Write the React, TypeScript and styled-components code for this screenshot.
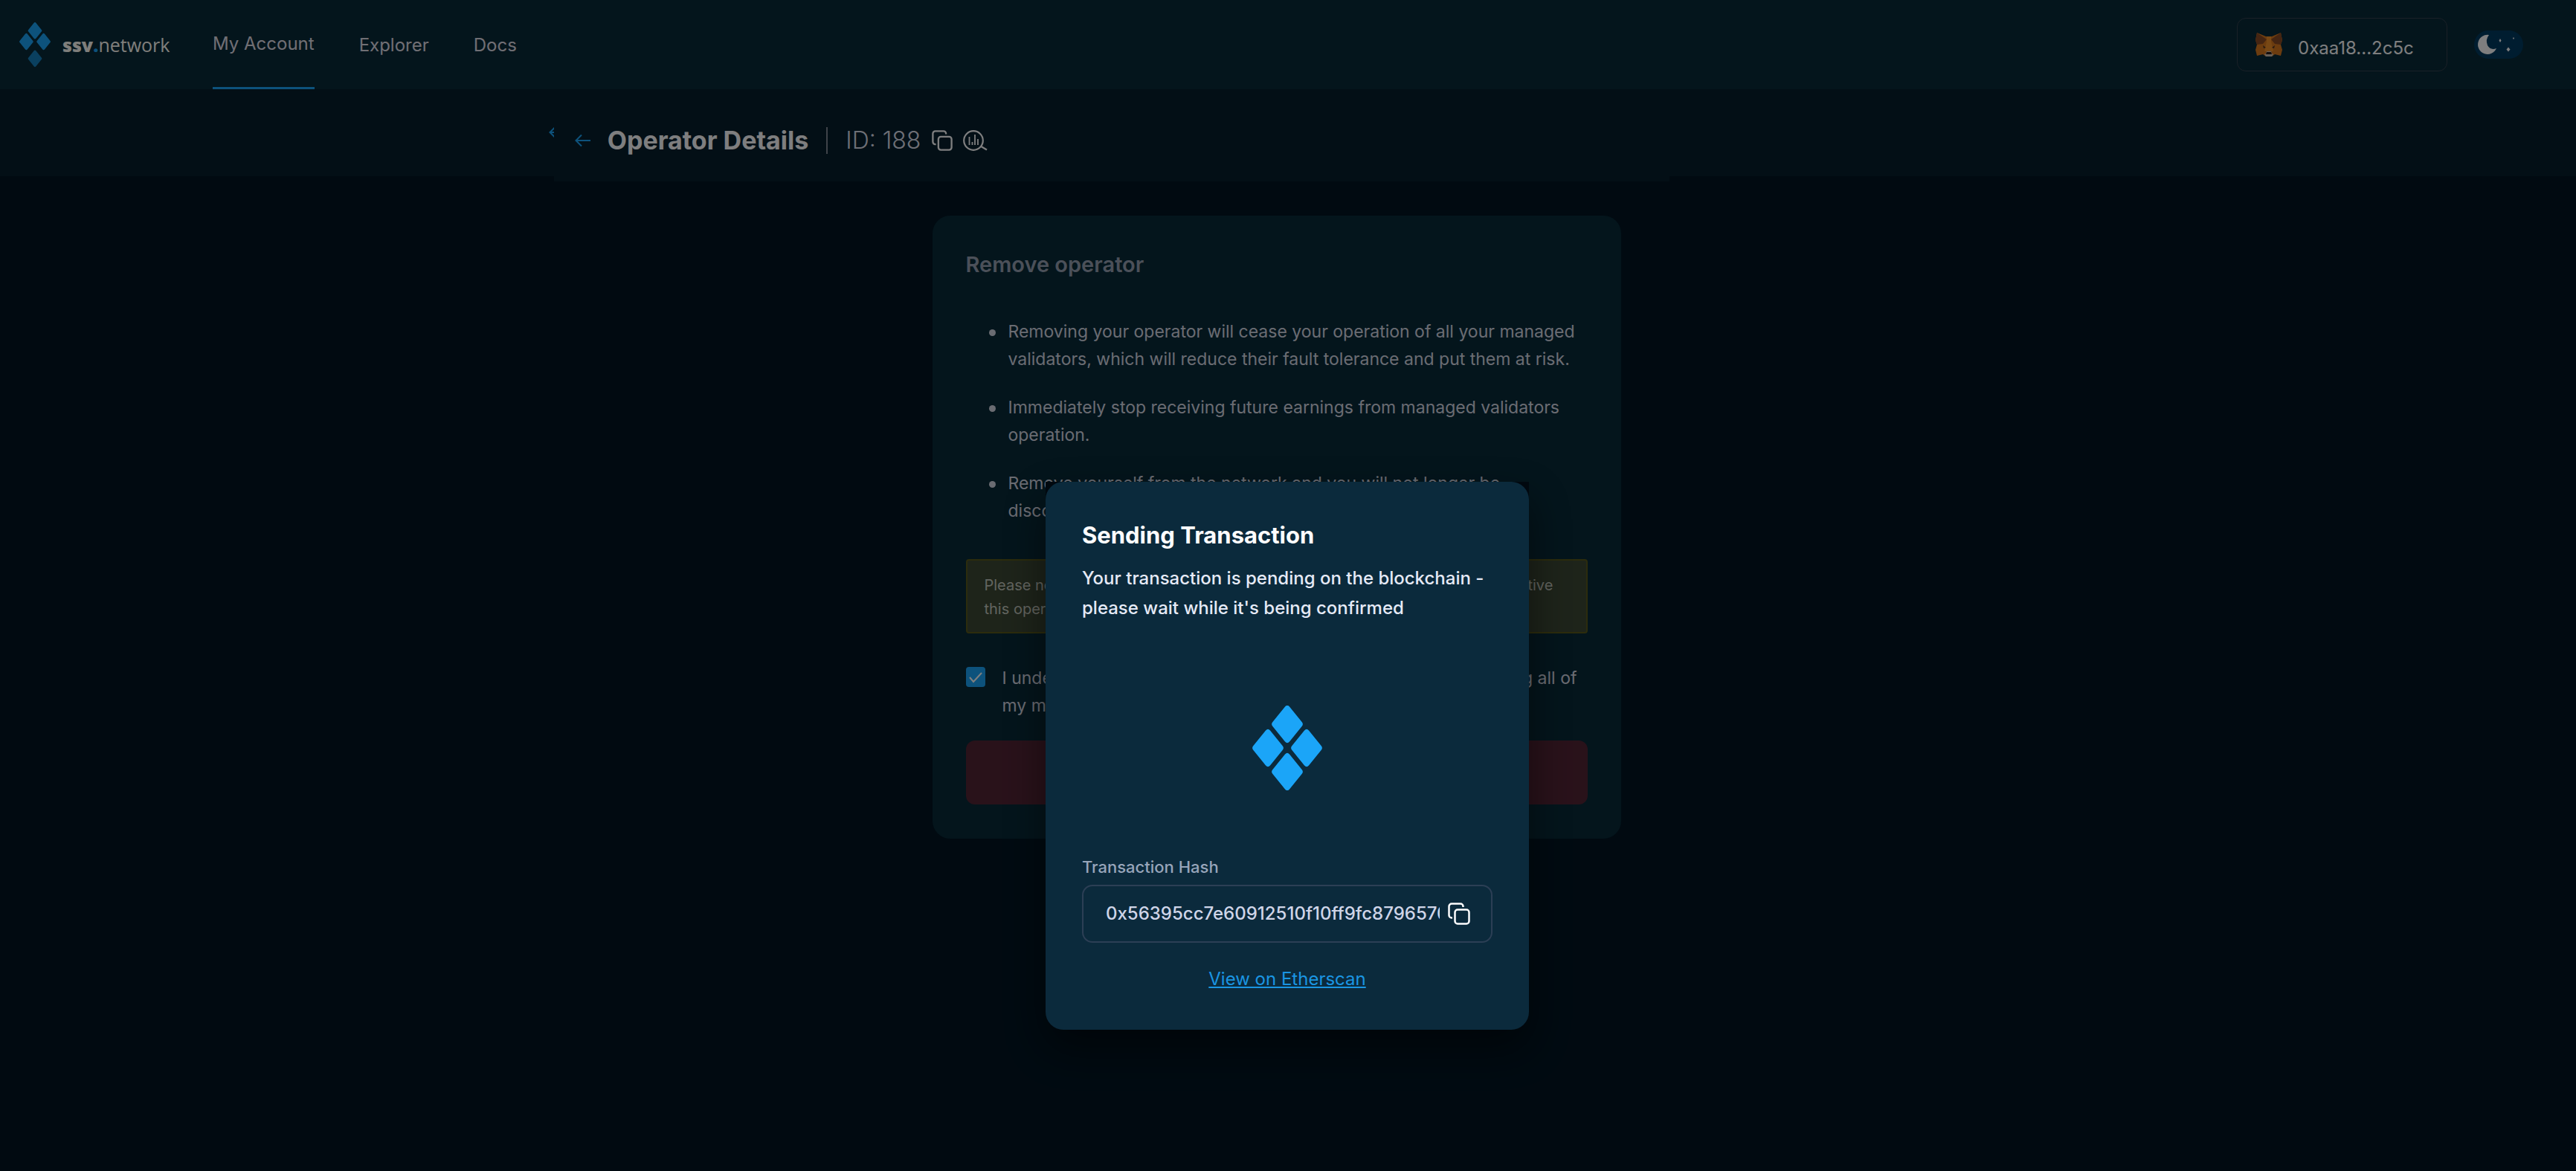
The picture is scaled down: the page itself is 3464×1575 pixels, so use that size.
import React from "react";
import styled, { createGlobalStyle } from "styled-components";

const Global = createGlobalStyle`
  *, *::before, *::after { box-sizing: border-box; }
  body {
    margin: 0;
    min-height: 100vh;
    background: #021523;
    color: #e6eaf7;
    font-family: Inter, "Noto Sans", sans-serif;
  }
  h1, h2, p, ul { margin: 0; padding: 0; }
  a { color: inherit; text-decoration: none; }
  button { font: inherit; color: inherit; background: none; border: 0; padding: 0; }
`;

const Header = styled.header`
  display: flex;
  align-items: center;
  height: 120px;
  padding: 0 71px 0 26px;
  background: #082a38;
`;

const Brand = styled.a`
  display: flex;
  align-items: center;
  gap: 16px;
  width: 260px;
  color: #fffdf6;
  font: 25px/32px "Open Sans", sans-serif;
  b { font-weight: 800; }
  i { color: #1ba5f8; font-style: normal; font-weight: 800; }
`;

const Nav = styled.nav`
  display: flex;
  gap: 60px;
  height: 100%;
  flex: 1;
`;

const NavLink = styled.a<{ $active?: boolean }>`
  display: flex;
  align-items: center;
  height: 100%;
  color: #e0dfe8;
  font-size: 24px;
  border-bottom: ${(p) => (p.$active ? "3px solid #1ba5f8" : "0")};
`;

const Wallet = styled.button`
  display: flex;
  align-items: center;
  gap: 21px;
  width: 283px;
  height: 72px;
  padding: 0 24px;
  border: 1px solid #34404f;
  border-radius: 12px;
  color: #fdfdfe;
  font-size: 24px;
`;

const Address = styled.span`
  padding-top: 8px;
`;

const ThemeToggle = styled.button`
  width: 66px;
  height: 38px;
  margin-left: 36px;
  border-radius: 19px;
  background: #003a60;
  svg { display: block; }
`;

const SubHeader = styled.div`
  display: flex;
  height: 117px;
  padding-left: calc(21.5% - 7px);
  background: #061f2c;
`;

const GhostArrow = styled.span`
  box-sizing: content-box;
  width: 7px;
  height: 20px;
  padding-top: 49px;
  overflow: hidden;
  svg { display: block; }
`;

const TitleBar = styled.div`
  display: flex;
  align-items: center;
  width: 1500px;
  height: 124px;
  padding: 14px 28px 0;
  background: #061f2c;
`;

const IconButton = styled.button`
  display: flex;
`;

const IdActions = styled.div`
  display: flex;
  gap: 14px;
  margin-left: 15px;
`;

const PageTitle = styled.h1`
  margin-left: 22px;
  padding-right: 24px;
  color: #fdfdfe;
  font-size: 34px;
  line-height: 36px;
  font-weight: 700;
`;

const OperatorId = styled.span`
  padding-left: 24px;
  border-left: 2px solid #7f8793;
  color: #dcdfea;
  font-size: 32px;
  line-height: 36px;
  font-weight: 300;
`;

const Main = styled.main`
  display: flex;
  justify-content: center;
  padding: 53px 31px 60px 0;
`;

const Card = styled.section`
  width: 926px;
  padding: 46px 45px;
  border-radius: 24px;
  background: #082a38;
`;

const CardTitle = styled.h2`
  color: #97a1b3;
  font-size: 29px;
  line-height: 40px;
  font-weight: 600;
`;

const Bullets = styled.ul`
  display: grid;
  gap: 28px;
  margin: 52px 0 46px;
  padding-left: 31px;
  color: #d5d8e4;
  font-size: 23px;
  line-height: 37px;
  list-style: none;
`;

const Bullet = styled.li`
  display: flex;
  gap: 17px;
  &::before {
    content: "";
    flex: none;
    width: 9px;
    height: 9px;
    margin-top: 15px;
    border-radius: 50%;
    background: #d5d8e4;
  }
`;

const Warning = styled.p`
  height: 100px;
  padding: 17px 23px;
  border: 2px solid #58581a;
  border-radius: 4px;
  background: #3c4835;
  color: #c4c8bf;
  font-size: 20px;
  line-height: 32px;
`;

const Consent = styled.label`
  display: flex;
  align-items: flex-start;
  gap: 23px;
  margin: 42px 0 28px;
  color: #d5d8e4;
  font-size: 23px;
  line-height: 37px;
`;

const Checkbox = styled.input`
  appearance: none;
  flex: none;
  width: 26px;
  height: 27px;
  margin: 3px 0 0;
  border-radius: 4px;
  background: #1ba5f8 url("data:image/svg+xml,%3Csvg xmlns='http://www.w3.org/2000/svg' viewBox='0 0 26 27'%3E%3Cpath d='M5 14l5 6L21 8' fill='none' stroke='white' stroke-width='2'/%3E%3C/svg%3E") center / contain no-repeat;
`;

const RemoveButton = styled.button`
  display: block;
  width: 100%;
  height: 86px;
  border-radius: 12px;
  background: #532435;
  font-size: 24px;
`;

const Overlay = styled.div`
  position: fixed;
  inset: 0;
  display: flex;
  justify-content: center;
  align-items: flex-start;
  padding: 648px 2px 0 0;
  background: rgba(0, 0, 0, 0.5);
`;

const DialogShade = styled.div`
  width: 650px;
  background: linear-gradient(#01080f 0 40px, transparent 40px);
  border-radius: 0 0 24px 24px;
  box-shadow: 0 24px 56px rgba(0, 0, 0, 0.5);
`;

const Dialog = styled.div`
  display: flex;
  flex-direction: column;
  padding: 51px 49px 50px;
  border-radius: 24px;
  background: #0b2a3c;
`;

const DialogTitle = styled.h2`
  color: #fdfdfe;
  font-size: 31px;
  line-height: 42px;
  font-weight: 700;
`;

const DialogText = styled.p`
  margin-top: 17px;
  color: #e6eaf7;
  font-size: 24px;
  line-height: 40px;
  font-weight: 500;
`;

const Loader = styled.div`
  display: flex;
  justify-content: center;
  padding: 111px 0 87px;
`;

const FieldLabel = styled.label`
  color: #97a5ba;
  font-size: 22px;
  line-height: 32px;
  font-weight: 500;
`;

const Field = styled.div`
  display: flex;
  align-items: center;
  gap: 11px;
  height: 78px;
  margin-top: 8px;
  padding: 0 28px 0 30px;
  border: 2px solid #2c3f55;
  border-radius: 14px;
`;

const HashInput = styled.input`
  flex: 1;
  min-width: 0;
  padding: 0;
  border: 0;
  background: none;
  color: #cfd5e8;
  font: 500 24px/36px Inter, sans-serif;
`;

const ExplorerLink = styled.a`
  align-self: center;
  margin-top: 31px;
  color: #1a95e2;
  font-size: 24px;
  line-height: 36px;
  text-decoration: underline;
`;

const Diamond = ({ cx, cy, o = 1 }: { cx: number; cy: number; o?: number }) => (
  <path
    d={`M${cx - 3} ${cy - 23.5}q3 -3.4 6 0l16.600 20.500q2.600 3 0 6l-16.600 20.500q-3 3.400 -6 0l-16.600 -20.500q-2.600 -3 0 -6z`}
    fill="#1ba5f8"
    opacity={o}
  />
);

const LoaderMark = () => (
  <svg width="94" height="114" viewBox="0 0 94 114">
    <Diamond cx={47} cy={25} />
    <Diamond cx={21} cy={57} />
    <Diamond cx={73} cy={57} />
    <Diamond cx={47} cy={89} />
  </svg>
);

const BrandMark = () => (
  <svg width="42" height="60" viewBox="0 0 94 134">
    <Diamond cx={47} cy={25} />
    <Diamond cx={21} cy={58} />
    <Diamond cx={73} cy={58} />
    <Diamond cx={47} cy={109} o={0.7} />
  </svg>
);

const Arrow = () => (
  <svg width="22" height="18" viewBox="0 0 22 18" fill="none" stroke="#1ba5f8" strokeWidth="2">
    <path d="M21 9H2M9 1.500L1.500 9L9 16.500" />
  </svg>
);

const CopyIcon = ({ size }: { size: number }) => (
  <svg width={size} height={size} viewBox="0 0 30 30" fill="none" stroke="#fdfdfe" strokeWidth="2.500">
    <rect x="9.500" y="9.500" width="19" height="19" rx="3.500" />
    <path d="M6 20.500H5A3.500 3.500 0 0 1 1.500 17V5A3.500 3.500 0 0 1 5 1.500H17A3.500 3.500 0 0 1 20.500 5V6" />
  </svg>
);

const ExploreIcon = () => (
  <svg width="34" height="28" viewBox="0 0 34 28" fill="none" stroke="#fdfdfe" strokeWidth="2.200">
    <circle cx="14" cy="14" r="12.800" />
    <path d="M23.500 21.500L32 26.500" />
    <path d="M8.500 9V20M12.500 16V20M16 6V20M20 12V20" strokeWidth="1.800" />
  </svg>
);

const Fox = () => (
  <svg width="36" height="32" viewBox="0 0 36 32">
    <path d="M2 0L14 5H22L34 0L36 10L34 16L36 23L34 31L26 29L22 32H14L10 29L2 31L0 23L2 16L0 10Z" fill="#d9781f" />
    <path d="M2 0L15 9L10 15L2 16L0 10ZM34 0L21 9L26 15L34 16L36 10Z" fill="#8a4a25" />
    <path d="M15 5H21V12L24 25H12L15 12Z" fill="#f0902a" />
    <path d="M10 17L14 20L11 21ZM26 17L22 20L25 21Z" fill="#4a3324" />
    <path d="M14 28L15 25H21L22 28L24 29L22 32H14L12 29Z" fill="#cfc0b2" />
    <path d="M15 26H21L22 29H14Z" fill="#2a1c18" />
  </svg>
);

const Night = () => (
  <svg width="66" height="38" viewBox="0 0 66 38" fill="#fdfdfe">
    <path d="M20 6A13 13 0 1 0 30 24Q22 27 18 20Q15 12 20 6Z" />
    <path d="M35 11l1.500 2.500l-1.500 2.500l-1.500-2.500zM46 22.500l2.500 3l-2.500 3l-2.500-3zM53 9l1 1.500l-1 1.500l-1-1.500z" />
  </svg>
);

export default function App() {
  return (
    <>
      <Global />
      <Header>
        <Brand href="#">
          <BrandMark />
          <span><b>ssv</b><i>.</i>network</span>
        </Brand>
        <Nav>
          <NavLink href="#" $active>My Account</NavLink>
          <NavLink href="#">Explorer</NavLink>
          <NavLink href="#">Docs</NavLink>
        </Nav>
        <Wallet><Fox /><Address>0xaa18...2c5c</Address></Wallet>
        <ThemeToggle aria-label="Dark mode"><Night /></ThemeToggle>
      </Header>
      <SubHeader>
        <GhostArrow><Arrow /></GhostArrow>
        <TitleBar>
          <IconButton aria-label="Back"><Arrow /></IconButton>
          <PageTitle>Operator Details</PageTitle>
          <OperatorId>ID: 188</OperatorId>
          <IdActions>
            <IconButton aria-label="Copy ID"><CopyIcon size={28} /></IconButton>
            <IconButton aria-label="Open explorer"><ExploreIcon /></IconButton>
          </IdActions>
        </TitleBar>
      </SubHeader>
      <Main>
        <Card>
          <CardTitle>Remove operator</CardTitle>
          <Bullets>
            <Bullet>Removing your operator will cease your operation of all your managed validators, which will reduce their fault tolerance and put them at risk.</Bullet>
            <Bullet>Immediately stop receiving future earnings from managed validators operation.</Bullet>
            <Bullet>Remove yourself from the network and you will not longer be discoverable.</Bullet>
          </Bullets>
          <Warning>Please note that this process is irreversible and you would not be able to reactive this operator in the future.</Warning>
          <Consent>
            <Checkbox type="checkbox" defaultChecked />
            <span>I understand that after removing my operator I am risking harming all of my managed validators.</span>
          </Consent>
          <RemoveButton>Remove Operator</RemoveButton>
        </Card>
      </Main>
      <Overlay>
        <DialogShade>
          <Dialog role="dialog" aria-labelledby="dialog-title">
            <DialogTitle id="dialog-title">Sending Transaction</DialogTitle>
            <DialogText>Your transaction is pending on the blockchain - please wait while it's being confirmed</DialogText>
            <Loader><LoaderMark /></Loader>
            <FieldLabel htmlFor="hash">Transaction Hash</FieldLabel>
            <Field>
              <HashInput id="hash" readOnly defaultValue="0x56395cc7e60912510f10ff9fc8796570f0a1" />
              <IconButton aria-label="Copy hash"><CopyIcon size={30} /></IconButton>
            </Field>
            <ExplorerLink href="#">View on Etherscan</ExplorerLink>
          </Dialog>
        </DialogShade>
      </Overlay>
    </>
  );
}
